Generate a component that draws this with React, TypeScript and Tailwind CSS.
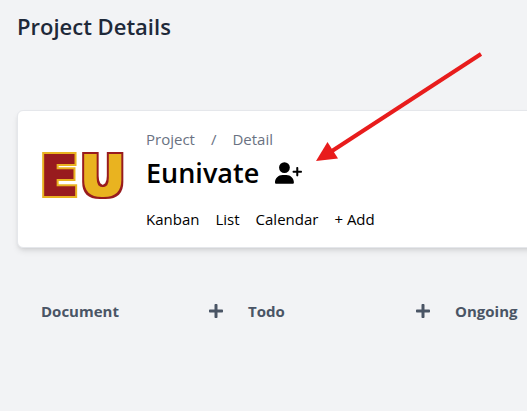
import { FaPlus } from "react-icons/fa";
import { FaUserPlus } from "react-icons/fa6";

const columns = ["Document", "Todo", "Ongoing"];
const views = ["Kanban", "List", "Calendar", "+ Add"];

type OutlineProps = { id: string; fill: string; outline: string };

function OutlineFilter({ id, fill, outline }: OutlineProps) {
  return (
    <filter id={id} x="-20%" y="-20%" width="140%" height="140%" colorInterpolationFilters="sRGB">
      <feMorphology in="SourceAlpha" operator="dilate" radius="3" result="outer" />
      <feFlood floodColor={outline} />
      <feComposite in2="outer" operator="in" result="border" />
      <feMorphology in="SourceAlpha" operator="dilate" radius="1" result="inner" />
      <feFlood floodColor={fill} />
      <feComposite in2="inner" operator="in" result="face" />
      <feMerge>
        <feMergeNode in="border" />
        <feMergeNode in="face" />
      </feMerge>
    </filter>
  );
}

function Logo() {
  return (
    <svg
      className="h-[80px] w-[84px] shrink-0 overflow-visible"
      viewBox="0 0 84 80"
      fontFamily="'DejaVu Sans', sans-serif"
      fontWeight="700"
      fontSize="56"
      role="img"
      aria-label="Eunivate logo"
    >
      <OutlineFilter id="logo-red" fill="#981b1e" outline="#e9b320" />
      <OutlineFilter id="logo-gold" fill="#e9b320" outline="#981b1e" />
      <text x="-2" y="56" filter="url(#logo-red)">
        E
      </text>
      <text x="38" y="56" filter="url(#logo-gold)">
        U
      </text>
    </svg>
  );
}

function Arrow() {
  return (
    <svg
      className="pointer-events-none absolute top-[50px] left-[312px] h-[116px] w-[174px]"
      viewBox="0 0 174 116"
      aria-hidden="true"
    >
      <path d="M169 4 L20 101" stroke="#e81c1c" strokeWidth="4" />
      <path d="M4 111 L15.500 92 L26 108.500 Z" fill="#e81c1c" />
    </svg>
  );
}

export default function App() {
  return (
    <div className="relative min-h-screen overflow-hidden bg-[#f2f3f5] pt-2.5 pl-[17px] font-['Open_Sans','Noto_Sans',sans-serif] text-[15px] leading-6 text-black">
      <h1 className="text-[22px] leading-8 font-semibold text-gray-800">Project Details</h1>

      <section className="mt-[68px] -mr-3 flex items-center gap-5 rounded-md border border-gray-200 bg-white py-4 pl-6 shadow-md">
        <Logo />
        <div>
          <nav aria-label="Breadcrumb" className="flex gap-4 text-gray-500">
            <a href="#project">Project</a>
            <span>/</span>
            <a href="#detail">Detail</a>
          </nav>
          <div className="mt-1 flex items-center gap-4">
            <h2 className="text-[27px] leading-9 font-semibold">Eunivate</h2>
            <button type="button" aria-label="Add member">
              <FaUserPlus className="h-[22px] w-[27px]" />
            </button>
          </div>
          <div className="mt-4 flex gap-4">
            {views.map((view) => (
              <button key={view} type="button">
                {view}
              </button>
            ))}
          </div>
        </div>
      </section>

      <div className="mt-[51px] flex gap-6 pl-6">
        {columns.map((column) => (
          <section key={column} className="flex w-[183px] shrink-0 items-center justify-between text-gray-600">
            <h3 className="font-bold">{column}</h3>
            <button type="button" aria-label={`Add to ${column}`}>
              <FaPlus className="size-4" />
            </button>
          </section>
        ))}
      </div>

      <Arrow />
    </div>
  );
}
